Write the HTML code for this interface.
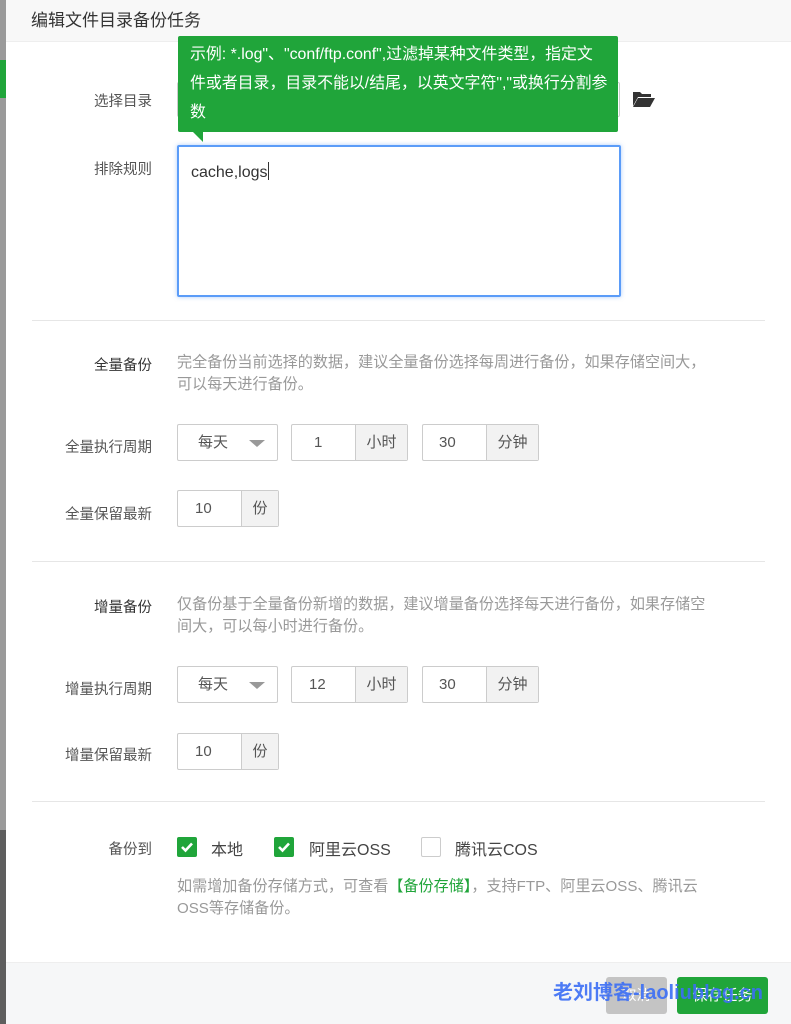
<!DOCTYPE html>
<html><head><meta charset="utf-8"><style>
*{box-sizing:border-box;margin:0;padding:0}
body{width:791px;height:1024px;position:relative;overflow:hidden;background:#fff;font-family:"Liberation Sans","Noto Sans CJK SC",sans-serif;color:#555;font-size:14px}
.a{position:absolute}
.lbl{position:absolute;width:120px;left:32px;text-align:right;font-size:14.5px;color:#555}
.desc{position:absolute;left:177px;width:600px;color:#999;font-size:15.1px;line-height:22px;white-space:nowrap}
.hr{position:absolute;left:32px;width:733px;height:1px;background:#e6e6e6}
.box{position:absolute;height:37px;border:1px solid #ccc;border-radius:2px;background:#fff;font-size:15px;color:#555}
.in{position:absolute;top:0;left:0;height:35px;line-height:35px;padding-left:22px}
.add{position:absolute;top:0;right:0;height:35px;line-height:35px;background:#f2f2f2;border-left:1px solid #ccc;text-align:center}
.sel{position:absolute;height:37px;width:101px;border:1px solid #ccc;border-radius:2px;line-height:35px;padding-left:20px;font-size:15px}
.sel:after{content:"";position:absolute;right:12px;top:15px;border-left:8px solid transparent;border-right:8px solid transparent;border-top:7px solid #999}
.cb{position:absolute;width:20px;height:20px;border-radius:2px;background:#20a53a}
.cb svg{position:absolute;left:3px;top:4px}
</style></head><body>
<div class="a" style="left:0;top:0;width:6px;height:830px;background:#9a9a9a"></div>
<div class="a" style="left:0;top:60px;width:6px;height:38px;background:#20a53a"></div>
<div class="a" style="left:0;top:830px;width:6px;height:194px;background:#5e5e5e"></div>
<div class="a" style="left:6px;top:0;width:785px;height:42px;background:#f8f8f8;border-bottom:1px solid #eee"></div>
<div class="a" style="left:31px;top:6px;font-size:17px;color:#333">编辑文件目录备份任务</div>

<div class="lbl" style="top:90px">选择目录</div>
<div class="a" style="left:177px;top:82px;width:443px;height:35px;border:1px solid #ccc;border-radius:2px"></div>
<svg class="a" style="left:632px;top:90px" width="24" height="18" viewBox="0 0 24 18"><path d="M1 2h7l2 2h9v3H6L1 16z" fill="#333"/><path d="M6 8h17l-5 9H1z" fill="#333"/></svg>

<div class="lbl" style="top:158px">排除规则</div>
<div class="a" style="left:177px;top:145px;width:444px;height:152px;border:2px solid #5b9cf8;border-radius:2px;box-shadow:0 0 4px rgba(91,156,248,.5)"></div>
<div class="a" style="left:191px;top:162px;font-size:16px;color:#333">cache,logs<span style="display:inline-block;width:1px;height:18px;background:#333;vertical-align:-3px"></span></div>

<div class="a" style="left:178px;top:36px;width:440px;height:96px;background:#20a53a;border-radius:2px;color:#fff;font-size:15.9px;line-height:29px;padding:4px 12px;white-space:nowrap;overflow:hidden"><div>示例: *.log"、"conf/ftp.conf",过滤掉某种文件类型，指定文</div><div>件或者目录，目录不能以/结尾，以英文字符","或换行分割参</div><div>数</div></div>
<div class="a" style="left:193px;top:132px;border-left:10px solid transparent;border-top:10px solid #20a53a;width:0;height:0"></div>

<div class="hr" style="top:320px"></div>
<div class="lbl" style="top:354px;color:#333">全量备份</div>
<div class="desc" style="top:352px">完全备份当前选择的数据，建议全量备份选择每周进行备份，如果存储空间大，<br>可以每天进行备份。</div>
<div class="lbl" style="top:436px">全量执行周期</div>
<div class="sel" style="left:177px;top:424px">每天</div>
<div class="box" style="left:291px;top:424px;width:117px"><div class="in">1</div><div class="add" style="width:52px">小时</div></div>
<div class="box" style="left:422px;top:424px;width:117px"><div class="in" style="padding-left:16px">30</div><div class="add" style="width:52px">分钟</div></div>
<div class="lbl" style="top:503px">全量保留最新</div>
<div class="box" style="left:177px;top:490px;width:102px"><div class="in" style="padding-left:17px">10</div><div class="add" style="width:37px">份</div></div>

<div class="hr" style="top:561px"></div>
<div class="lbl" style="top:596px;color:#333">增量备份</div>
<div class="desc" style="top:594px">仅备份基于全量备份新增的数据，建议增量备份选择每天进行备份，如果存储空<br>间大，可以每小时进行备份。</div>
<div class="lbl" style="top:678px">增量执行周期</div>
<div class="sel" style="left:177px;top:666px">每天</div>
<div class="box" style="left:291px;top:666px;width:117px"><div class="in" style="padding-left:17px">12</div><div class="add" style="width:52px">小时</div></div>
<div class="box" style="left:422px;top:666px;width:117px"><div class="in" style="padding-left:16px">30</div><div class="add" style="width:52px">分钟</div></div>
<div class="lbl" style="top:744px">增量保留最新</div>
<div class="box" style="left:177px;top:733px;width:102px"><div class="in" style="padding-left:17px">10</div><div class="add" style="width:37px">份</div></div>

<div class="hr" style="top:801px"></div>
<div class="lbl" style="top:838px">备份到</div>
<div class="cb" style="left:177px;top:837px"><svg width="14" height="12" viewBox="0 0 14 12"><path d="M2 6l3.5 3.5L12 2.5" stroke="#fff" stroke-width="2.6" fill="none"/></svg></div>
<div class="a" style="left:211px;top:836px;font-size:16px;color:#444">本地</div>
<div class="cb" style="left:274px;top:837px"><svg width="14" height="12" viewBox="0 0 14 12"><path d="M2 6l3.5 3.5L12 2.5" stroke="#fff" stroke-width="2.6" fill="none"/></svg></div>
<div class="a" style="left:309px;top:836px;font-size:16px;color:#444">阿里云OSS</div>
<div class="a" style="left:421px;top:837px;width:20px;height:20px;border:1px solid #ccc;border-radius:2px"></div>
<div class="a" style="left:455px;top:836px;font-size:16px;color:#444">腾讯云COS</div>
<div class="desc" style="top:876px">如需增加备份存储方式，可查看<span style="color:#20a53a">【备份存储】</span>，支持FTP、阿里云OSS、腾讯云<br>OSS等存储备份。</div>

<div class="a" style="left:6px;top:962px;width:785px;height:62px;background:#f6f7f8;border-top:1px solid #eee"></div>
<div class="a" style="left:606px;top:977px;width:61px;height:37px;background:#c4c4c4;border-radius:3px;color:#fff;text-align:center;line-height:37px;font-size:14px">取消</div>
<div class="a" style="left:677px;top:977px;width:91px;height:37px;background:#20a53a;border-radius:3px;color:#fff;text-align:center;line-height:37px;font-size:15px">保存任务</div>
<div class="a" style="left:553px;top:976px;font-size:20px;font-weight:bold;color:#3b6ef5;opacity:.9">老刘博客-laoliublog.cn</div>
</body></html>
